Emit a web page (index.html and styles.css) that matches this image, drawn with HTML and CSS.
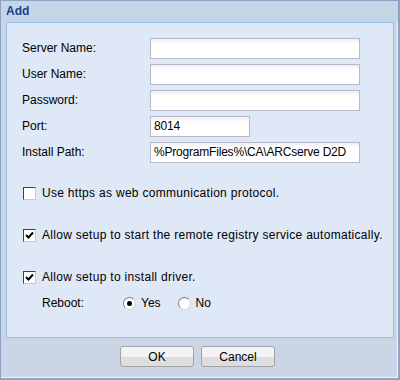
FILE: index.html
```html
<!DOCTYPE html>
<html lang="en">
<head>
    <meta charset="UTF-8">
    <title>Add</title>
    <link rel="stylesheet" href="styles.css">
</head>
<body>
    <div class="window">
        <div class="window-header">Add</div>

        <div class="panel">
            <div class="form-grid">
                <label class="field-label">Server Name:</label>
                <div class="text-field"></div>

                <label class="field-label">User Name:</label>
                <div class="text-field"></div>

                <label class="field-label">Password:</label>
                <div class="text-field"></div>

                <label class="field-label">Port:</label>
                <div class="text-field short">8014</div>

                <label class="field-label">Install Path:</label>
                <div class="text-field">%ProgramFiles%\CA\ARCserve D2D</div>
            </div>

            <div class="option first">
                <span class="check"></span>
                <span class="option-text">Use https as web communication protocol.</span>
            </div>

            <div class="option">
                <span class="check">
                    <svg width="9" height="9" viewBox="0 0 9 9"><path d="M1 4 L3.5 6.5 L8 1.5" fill="none" stroke="#000" stroke-width="2"/></svg>
                </span>
                <span class="option-text">Allow setup to start the remote registry service automatically.</span>
            </div>

            <div class="option">
                <span class="check">
                    <svg width="9" height="9" viewBox="0 0 9 9"><path d="M1 4 L3.5 6.5 L8 1.5" fill="none" stroke="#000" stroke-width="2"/></svg>
                </span>
                <span class="option-text">Allow setup to install driver.</span>
            </div>

            <div class="reboot-row">
                <span class="reboot-label">Reboot:</span>
                <span class="radio checked"></span>
                <span class="radio-text">Yes</span>
                <span class="radio"></span>
                <span class="radio-text">No</span>
            </div>
        </div>

        <div class="window-footer">
            <button class="btn">OK</button>
            <button class="btn">Cancel</button>
        </div>
    </div>
</body>
</html>
```

FILE: styles.css
```css
* {
    margin: 0;
    padding: 0;
    box-sizing: border-box;
}

body {
    background: #ffffff;
    font-family: 'Liberation Sans', Arial, sans-serif;
    font-size: 12px;
    color: #000;
}

.window {
    width: 400px;
    height: 380px;
    display: flex;
    flex-direction: column;
    background: #cad6e6;
    border: 1px solid #8ea3c4;
    border-right-width: 2px;
    border-bottom-width: 2px;
    box-shadow: inset -1px -1px 0 #eef3f9;
}

.window-header {
    height: 21px;
    background: #c4d6e6;
    color: #15428b;
    font-weight: bold;
    font-size: 12px;
    line-height: 21px;
    padding-left: 5px;
}

.panel {
    margin: 0 4px 0 5px;
    height: 316px;
    background: #dfe8f6;
    border: 1px solid #99bbe8;
    padding: 15px 0 0 15px;
}

.form-grid {
    display: grid;
    grid-template-columns: 128px 210px;
    row-gap: 5px;
    align-items: center;
}

.field-label {
    line-height: 21px;
}

.text-field {
    height: 21px;
    border: 1px solid #b5b8c8;
    background: linear-gradient(#f0eef6, #ffffff 5px);
    padding: 0 3px;
    line-height: 19px;
    letter-spacing: -0.2px;
}

.text-field.short {
    width: 100px;
}

.option {
    display: flex;
    align-items: center;
    height: 20px;
    margin-top: 22px;
    padding-left: 1px;
}

.option.first {
    margin-top: 20px;
}

.option-text {
    letter-spacing: 0.3px;
}

.check {
    width: 13px;
    height: 13px;
    margin-right: 6px;
    background: #fff;
    border: 1px solid;
    border-color: #404040 #c8c8c8 #c8c8c8 #404040;
    display: flex;
    align-items: center;
    justify-content: center;
}

.reboot-row {
    display: flex;
    align-items: center;
    height: 20px;
    margin-top: 6px;
    padding-left: 20px;
}

.reboot-label {
    width: 81px;
}

.radio {
    width: 13px;
    height: 13px;
    border-radius: 50%;
    background: #fff;
    border: 1px solid;
    border-color: #808080 #d4d0c8 #d4d0c8 #808080;
    margin-right: 5px;
    display: flex;
    align-items: center;
    justify-content: center;
}

.radio.checked::after {
    content: "";
    width: 5px;
    height: 5px;
    border-radius: 50%;
    background: #000;
}

.radio-text {
    margin-right: 17px;
}

.window-footer {
    flex: 1;
    display: flex;
    justify-content: center;
    align-items: flex-start;
    gap: 7px;
    padding-top: 8px;
    padding-right: 4px;
}

.btn {
    width: 74px;
    height: 21px;
    font-family: 'Liberation Sans', Arial, sans-serif;
    font-size: 12px;
    color: #000;
    border: 1px solid #a3a3ab;
    border-radius: 3px;
    background: linear-gradient(#f6f3f6 0, #f4f1f4 50%, #dedede 50%, #dedede 100%);
}
```
